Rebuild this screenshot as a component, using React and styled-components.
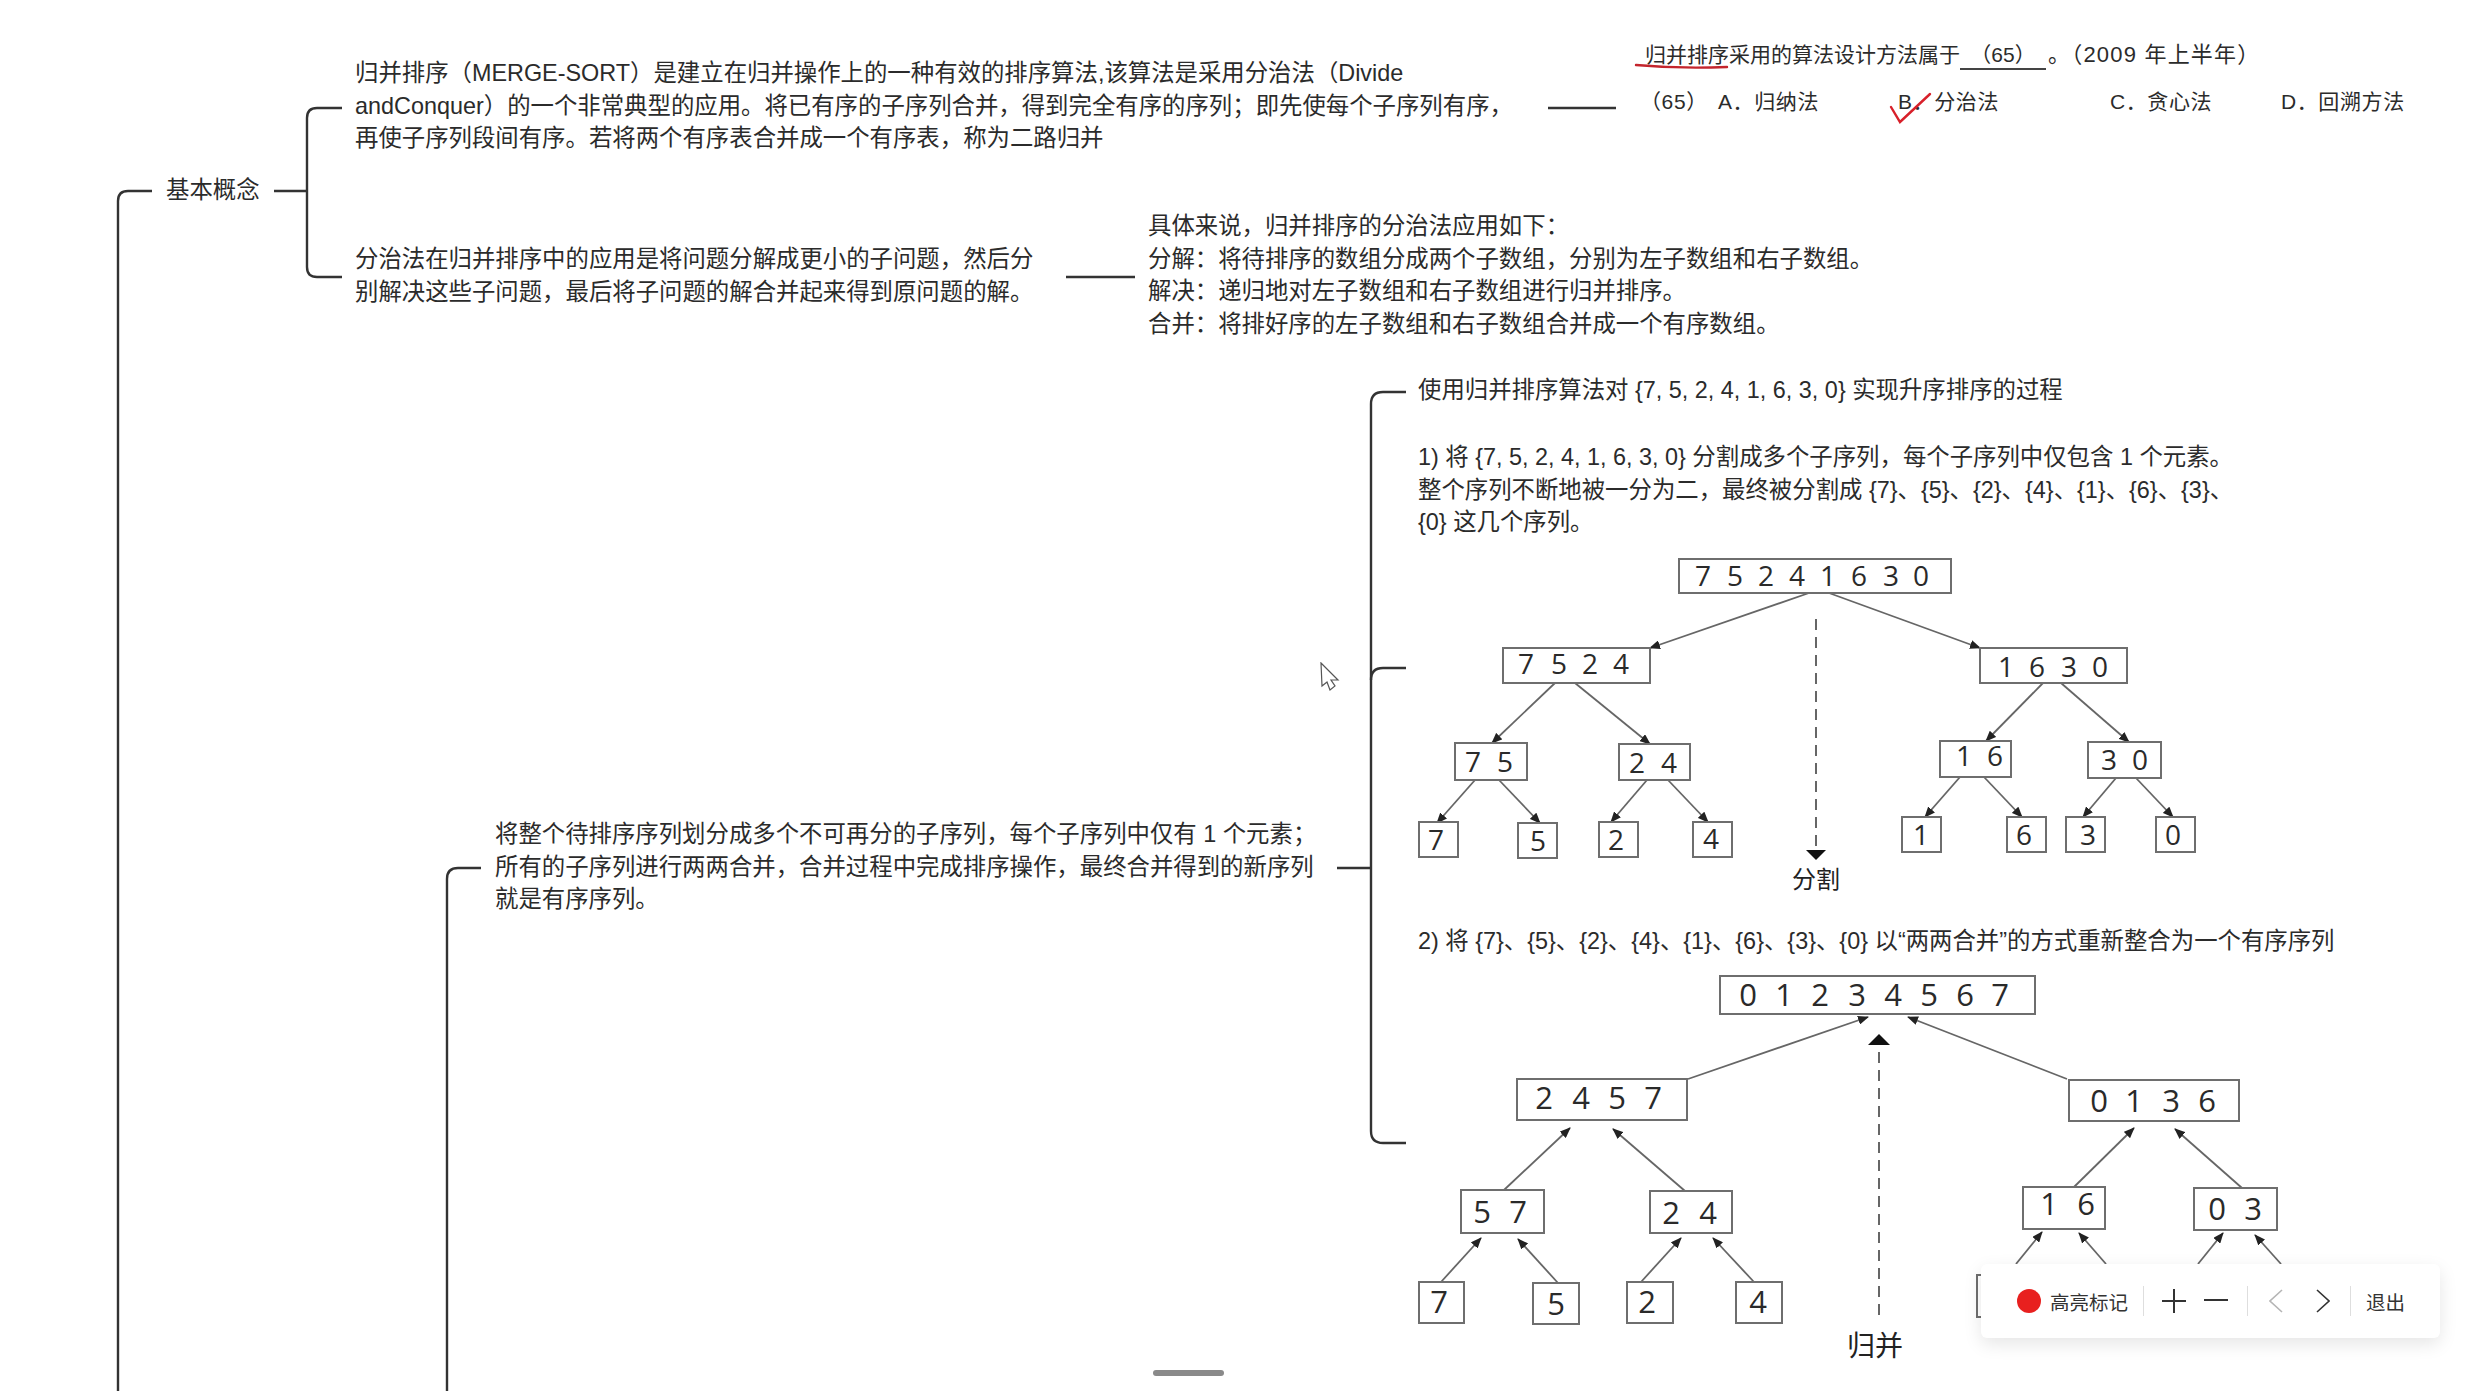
import React from 'react';
import styled, { createGlobalStyle } from 'styled-components';

const GlobalStyle = createGlobalStyle`
  html, body {
    margin: 0;
    padding: 0;
    background: #fff;
    overflow: hidden;
  }
  body {
    font-family: "Liberation Sans", "Noto Sans CJK SC", sans-serif;
    color: #2b2b2b;
  }
`;

const connectors = [
  'M152 191 H128 Q118 191 118 201 V1391',
  'M274 191 H307',
  'M342 108 H317 Q307 108 307 118 V267 Q307 277 317 277 H342',
  'M1066 277 H1135',
  'M1548 108 H1616',
  'M481 868 H458 Q447 868 447 879 V1391',
  'M1337 868 H1371',
  'M1406 392 H1383 Q1371 392 1371 404 V1131 Q1371 1143 1383 1143 H1406',
  'M1371 680 Q1371 668 1383 668 H1406',
];

const box = (x0, y0, x1, y1, cy, digits, xs) => ({ x0, y0, x1, y1, cy, digits, xs });

const splitBoxes = [
  box(1679, 559, 1951, 593, 575, '75241630', [1703, 1735, 1766, 1797, 1828, 1859, 1891, 1921]),
  box(1503, 648, 1650, 683, 663, '7524', [1526, 1559, 1590, 1621]),
  box(1980, 648, 2127, 683, 666, '1630', [2006, 2037, 2069, 2100]),
  box(1455, 743, 1527, 780, 761, '75', [1473, 1505]),
  box(1619, 744, 1690, 780, 762, '24', [1637, 1669]),
  box(1940, 741, 2011, 777, 755, '16', [1964, 1995]),
  box(2088, 742, 2161, 778, 759, '30', [2109, 2140]),
  box(1419, 822, 1458, 857, 839, '7', [1436]),
  box(1518, 823, 1557, 858, 840, '5', [1538]),
  box(1599, 822, 1638, 857, 839, '2', [1616]),
  box(1693, 822, 1732, 857, 838, '4', [1711]),
  box(1902, 817, 1941, 852, 834, '1', [1921]),
  box(2007, 817, 2046, 852, 834, '6', [2024]),
  box(2066, 817, 2105, 852, 834, '3', [2088]),
  box(2156, 817, 2195, 852, 834, '0', [2173]),
];

const splitArrows = [
  [1809, 593, 1650, 648], [1829, 593, 1980, 648],
  [1555, 683, 1492, 743], [1575, 683, 1650, 744],
  [2043, 683, 1986, 741], [2061, 683, 2129, 742],
  [1475, 780, 1437, 823], [1499, 780, 1540, 823],
  [1647, 780, 1611, 822], [1668, 780, 1708, 822],
  [1960, 777, 1925, 817], [1984, 777, 2022, 817],
  [2116, 778, 2083, 817], [2136, 778, 2173, 817],
];

const mergeBoxes = [
  box(1720, 976, 2035, 1014, 994, '01234567', [1748, 1784, 1820, 1857, 1893, 1929, 1965, 2000]),
  box(1517, 1079, 1687, 1120, 1097, '2457', [1544, 1581, 1617, 1653]),
  box(2069, 1080, 2239, 1121, 1100, '0136', [2099, 2134, 2171, 2207]),
  box(1461, 1190, 1544, 1233, 1211, '57', [1482, 1518]),
  box(1650, 1191, 1732, 1233, 1212, '24', [1671, 1708]),
  box(2023, 1187, 2105, 1229, 1203, '16', [2049, 2086]),
  box(2194, 1188, 2277, 1230, 1208, '03', [2217, 2253]),
  box(1419, 1282, 1464, 1323, 1301, '7', [1439]),
  box(1533, 1283, 1579, 1324, 1303, '5', [1556]),
  box(1627, 1282, 1673, 1323, 1301, '2', [1647]),
  box(1736, 1282, 1782, 1323, 1301, '4', [1758]),
  box(1977, 1275, 2022, 1317, 1296, '', []),
];

const mergeArrows = [
  [1688, 1079, 1868, 1017], [2067, 1079, 1908, 1017],
  [1504, 1190, 1570, 1128], [1685, 1191, 1613, 1129],
  [2074, 1187, 2134, 1128], [2242, 1188, 2175, 1129],
  [1441, 1282, 1481, 1238], [1558, 1283, 1518, 1239],
  [1641, 1282, 1681, 1238], [1754, 1282, 1713, 1238],
  [2016, 1264, 2042, 1232], [2106, 1264, 2079, 1233],
  [2198, 1264, 2223, 1233], [2281, 1264, 2255, 1235],
];

const TreeFigure = ({ id, x, y, w, h, boxes, arrows, digitSize, children }) => (
  <Figure $x={x} $y={y} width={w} height={h} viewBox={`${x} ${y} ${w} ${h}`}>
    <defs>
      <marker id={id} markerUnits="userSpaceOnUse" markerWidth="11" markerHeight="9" refX="10" refY="4.5" orient="auto">
        <path d="M0 0 L11 4.5 L0 9 Z" fill="#222" />
      </marker>
    </defs>
    {arrows.map((a, i) => (
      <line key={i} x1={a[0]} y1={a[1]} x2={a[2]} y2={a[3]} stroke="#666" strokeWidth="1.8" markerEnd={`url(#${id})`} />
    ))}
    {boxes.map((b, i) => (
      <g key={i}>
        <rect x={b.x0} y={b.y0} width={b.x1 - b.x0} height={b.y1 - b.y0} fill="#fff" stroke="#6e6e6e" strokeWidth="2" />
        {b.xs.map((dx, j) => (
          <Digit key={j} x={dx} y={b.cy} $size={digitSize} textAnchor="middle" dominantBaseline="central">
            {b.digits[j]}
          </Digit>
        ))}
      </g>
    ))}
    {children}
  </Figure>
);

const App = () => (
  <>
    <GlobalStyle />
    <Canvas>
      <Connectors width="2473" height="1391" viewBox="0 0 2473 1391">
        {connectors.map((d) => (
          <path key={d} d={d} fill="none" stroke="#333" strokeWidth="2.4" />
        ))}
      </Connectors>

      <Node $x={166} $y={174}>基本概念</Node>

      <Node $x={355} $y={57}>
        归并排序（MERGE-SORT）是建立在归并操作上的一种有效的排序算法,该算法是采用分治法（Divide
        <br />
        andConquer）的一个非常典型的应用。将已有序的子序列合并，得到完全有序的序列；即先使每个子序列有序，
        <br />
        再使子序列段间有序。若将两个有序表合并成一个有序表，称为二路归并
      </Node>

      <Node $x={355} $y={243}>
        分治法在归并排序中的应用是将问题分解成更小的子问题，然后分
        <br />
        别解决这些子问题，最后将子问题的解合并起来得到原问题的解。
      </Node>

      <Node $x={1148} $y={210}>
        具体来说，归并排序的分治法应用如下：
        <br />
        分解：将待排序的数组分成两个子数组，分别为左子数组和右子数组。
        <br />
        解决：递归地对左子数组和右子数组进行归并排序。
        <br />
        合并：将排好序的左子数组和右子数组合并成一个有序数组。
      </Node>

      <QuestionNode $x={1645} $y={39}>
        归并排序采用的算法设计方法属于<Blank>（65）</Blank><YearNote>。（2009 年上半年）</YearNote>
      </QuestionNode>

      <OptionRow $x={1640} $y={86}>
        <span>（65）</span>
        <span>A．归纳法</span>
        <span>B．分治法</span>
        <span>C．贪心法</span>
        <span>D．回溯方法</span>
      </OptionRow>

      <Node $x={495} $y={818}>
        将整个待排序序列划分成多个不可再分的子序列，每个子序列中仅有 1 个元素；
        <br />
        所有的子序列进行两两合并，合并过程中完成排序操作，最终合并得到的新序列
        <br />
        就是有序序列。
      </Node>

      <Node $x={1418} $y={374}>使用归并排序算法对 {'{7, 5, 2, 4, 1, 6, 3, 0}'} 实现升序排序的过程</Node>

      <Node $x={1418} $y={441}>
        1) 将 {'{7, 5, 2, 4, 1, 6, 3, 0}'} 分割成多个子序列，每个子序列中仅包含 1 个元素。
        <br />
        整个序列不断地被一分为二，最终被分割成 {'{7}、{5}、{2}、{4}、{1}、{6}、{3}、'}
        <br />
        {'{0}'} 这几个序列。
      </Node>

      <Node $x={1418} $y={925}>
        2) 将 {'{7}、{5}、{2}、{4}、{1}、{6}、{3}、{0}'} 以“两两合并”的方式重新整合为一个有序序列
      </Node>

      <TreeFigure id="split-head" x={1400} y={540} w={820} h={370} boxes={splitBoxes} arrows={splitArrows} digitSize={28}>
        <line x1="1816" y1="619" x2="1816" y2="850" stroke="#666" strokeWidth="2" strokeDasharray="11 7" />
        <path d="M1806 850 H1826 L1816 860 Z" fill="#111" />
        <FigureLabel x="1816" y="877" $size={24} textAnchor="middle" dominantBaseline="central">分割</FigureLabel>
      </TreeFigure>

      <TreeFigure id="merge-head" x={1400} y={960} w={900} h={431} boxes={mergeBoxes} arrows={mergeArrows} digitSize={31}>
        <line x1="1879" y1="1315" x2="1879" y2="1045" stroke="#666" strokeWidth="2" strokeDasharray="11 7" />
        <path d="M1868 1045 H1890 L1879 1034 Z" fill="#111" />
        <FigureLabel x="1875" y="1344" $size={28} textAnchor="middle" dominantBaseline="central">归并</FigureLabel>
      </TreeFigure>

      <Marks width="2473" height="1391" viewBox="0 0 2473 1391">
        <path d="M1636 65 Q1680 69 1727 67" fill="none" stroke="#c4252d" strokeWidth="2.4" strokeLinecap="round" />
        <path d="M1891 107 L1900 122 L1930 94" fill="none" stroke="#d8202a" strokeWidth="2.4" strokeLinecap="round" />
      </Marks>

      <Cursor width="20" height="30" viewBox="-1 -1 20 30">
        <path d="M0 0 L17 17 L10 17 L14 23 L9 27 L6 19 L1 23 Z" fill="#fff" stroke="#555" strokeWidth="1.2" />
      </Cursor>

      <ScrollHandle />

      <Toolbar>
        <HighlightButton>
          <RedDot />
          高亮标记
        </HighlightButton>
        <Divider />
        <ToolGroup>
          <svg width="24" height="24" viewBox="0 0 24 24">
            <path d="M0 12 H24 M12 0 V24" stroke="#333" strokeWidth="2" />
          </svg>
          <svg width="24" height="24" viewBox="0 0 24 24">
            <path d="M0 11 H24" stroke="#333" strokeWidth="2" />
          </svg>
        </ToolGroup>
        <Divider />
        <NavGroup>
          <svg width="14" height="24" viewBox="0 0 14 24">
            <path d="M13 1 L1 12 L13 23" fill="none" stroke="#b5b5b5" strokeWidth="1.6" />
          </svg>
          <svg width="14" height="24" viewBox="0 0 14 24">
            <path d="M1 1 L13 12 L1 23" fill="none" stroke="#333" strokeWidth="1.6" />
          </svg>
        </NavGroup>
        <Divider />
        <ExitButton>退出</ExitButton>
      </Toolbar>
    </Canvas>
  </>
);

const Canvas = styled.div`
  position: relative;
  width: 2473px;
  height: 1391px;
  overflow: hidden;
  background: #fff;
`;

const Connectors = styled.svg`
  position: absolute;
  left: 0;
  top: 0;
`;

const Marks = styled(Connectors)`
  z-index: 2;
`;

const Node = styled.div`
  position: absolute;
  left: ${(p) => p.$x}px;
  top: ${(p) => p.$y}px;
  font-size: 23.4px;
  line-height: 32.7px;
  white-space: nowrap;
`;

const QuestionNode = styled(Node)`
  font-size: 21px;
  line-height: 32px;
`;

const Blank = styled.span`
  display: inline-block;
  width: 86px;
  height: 29px;
  line-height: 32px;
  border-bottom: 2px solid #444;
  text-align: center;
`;

const YearNote = styled.span`
  font-size: 22px;
  letter-spacing: 1.2px;
  margin-left: 2px;
`;

const OptionRow = styled(Node)`
  display: grid;
  grid-template-columns: 78px 180px 212px 171px auto;
  font-size: 21px;
  line-height: 32px;
  letter-spacing: 0.6px;
`;

const Figure = styled.svg`
  position: absolute;
  left: ${(p) => p.$x}px;
  top: ${(p) => p.$y}px;
`;

const Digit = styled.text`
  font-family: "Open Sans", sans-serif;
  font-size: ${(p) => p.$size}px;
  fill: #2a2a2a;
`;

const FigureLabel = styled.text`
  font-family: "Noto Sans CJK SC", sans-serif;
  font-size: ${(p) => p.$size}px;
  fill: #222;
`;

const Cursor = styled.svg`
  position: absolute;
  left: 1320px;
  top: 662px;
`;

const ScrollHandle = styled.div`
  position: absolute;
  left: 1153px;
  bottom: 15px;
  width: 71px;
  height: 6px;
  border-radius: 3px;
  background: #8a8a8a;
`;

const Toolbar = styled.div`
  position: absolute;
  left: 1981px;
  top: 1264px;
  z-index: 3;
  box-sizing: border-box;
  width: 459px;
  height: 74px;
  display: flex;
  align-items: center;
  padding-left: 36px;
  background: #fff;
  border-radius: 6px;
  box-shadow: 0 6px 18px rgba(0, 0, 0, 0.1);
  font-size: 19.5px;
  color: #333;
`;

const HighlightButton = styled.div`
  display: flex;
  align-items: center;
  gap: 9px;
  width: 126px;
`;

const RedDot = styled.span`
  width: 24px;
  height: 24px;
  border-radius: 50%;
  background: #e8201f;
`;

const Divider = styled.span`
  width: 1px;
  height: 30px;
  background: #dedede;
`;

const ToolGroup = styled.div`
  display: flex;
  align-items: center;
  gap: 18px;
  width: 103px;
  padding-left: 18px;
  box-sizing: border-box;
`;

const NavGroup = styled.div`
  display: flex;
  align-items: center;
  gap: 33px;
  width: 102px;
  padding-left: 21px;
  box-sizing: border-box;
`;

const ExitButton = styled.div`
  margin-left: 15px;
`;

export default App;
